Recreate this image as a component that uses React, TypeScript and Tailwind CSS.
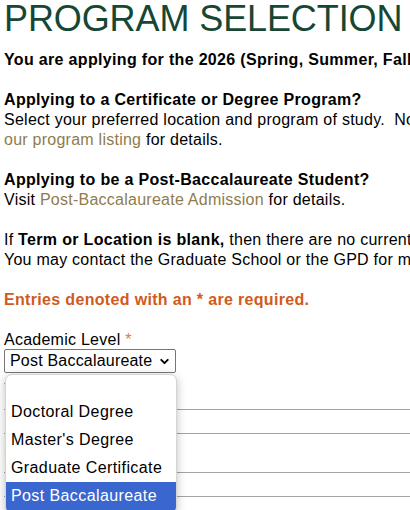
import { ChevronDown } from 'lucide-react';

const font = { fontFamily: '"Liberation Sans", Arial, sans-serif' };

export default function App() {
  const options = ['Doctoral Degree', "Master's Degree", 'Graduate Certificate', 'Post Baccalaureate'];

  return (
    <div className="relative w-[410px] h-[510px] overflow-hidden bg-white text-black" style={font}>
      <div className="w-[900px] pl-[4px] text-[16px] leading-[20px] tracking-[0.25px]">
        {/* Heading */}
        <h1 className="text-[36px] leading-[36px] text-[#154734] tracking-[-0.1px] pt-[1px] h-[50px]">
          PROGRAM SELECTION
        </h1>

        <p className="font-bold tracking-[0.33px]">
          You are applying for the 2026 (Spring, Summer, Fall) terms.
        </p>
        <br />

        <p>
          <span className="font-bold tracking-[0.33px]">Applying to a Certificate or Degree Program?</span>
          <br />
          Select your preferred location and program of study.&nbsp; Not all programs are offered at every location, see
          <br />
          <a className="text-[#8e7c4c]">our program listing</a> for details.
        </p>
        <br />

        <p>
          <span className="font-bold tracking-[0.33px]">Applying to be a Post-Baccalaureate Student?</span>
          <br />
          Visit <a className="text-[#8e7c4c]">Post-Baccalaureate Admission</a> for details.
        </p>
        <br />

        <p>
          If <span className="font-bold tracking-[0.33px]">Term or Location is blank,</span> then there are no current openings for that program.
          <br />
          You may contact the Graduate School or the GPD for more information.
        </p>
        <br />

        <p className="font-bold tracking-[0.33px] text-[#d05b1c]">Entries denoted with an * are required.</p>
        <br />

        {/* Form */}
        <div>
          <label className="block">
            Academic Level <span className="text-[#e0793a]">*</span>
          </label>
          <div className="mt-[-1px] flex items-center justify-between w-[172px] h-[24px] border border-[#767676] rounded-[2px] pl-[5px] pr-[4px] tracking-[0.2px]">
            <span>Post Baccalaureate</span>
            <ChevronDown className="w-[13px] h-[13px]" strokeWidth={3.5} />
          </div>

          <label className="block mt-[7px] text-[#8e7c4c]">Term <span className="text-[#e0793a]">*</span></label>
          <div className="mt-[9px] w-[800px] h-[25px] border-y border-[#a3a3a3]" />

          <label className="block mt-[8px] text-[#8e7c4c]">Location <span className="text-[#e0793a]">*</span></label>
          <div className="mt-[10px] w-[800px] h-[25px] border-y border-[#a3a3a3]" />
        </div>
      </div>

      {/* Open dropdown list */}
      <div className="absolute left-[5px] top-[374px] w-[172px] h-[140px] bg-white rounded-[7px] border border-[#d4d4d4] shadow-[0_2px_10px_rgba(0,0,0,0.25)] overflow-hidden text-[16px] tracking-[0.4px]">
        <div className="h-[23px]" />
        {options.map((opt, i) => (
          <div
            key={i}
            className={
              i === options.length - 1
                ? 'h-[28px] flex items-center pl-[5px] bg-[#3a66cf] text-white'
                : 'h-[28px] flex items-center pl-[5px]'
            }
          >
            {opt}
          </div>
        ))}
      </div>
    </div>
  );
}
